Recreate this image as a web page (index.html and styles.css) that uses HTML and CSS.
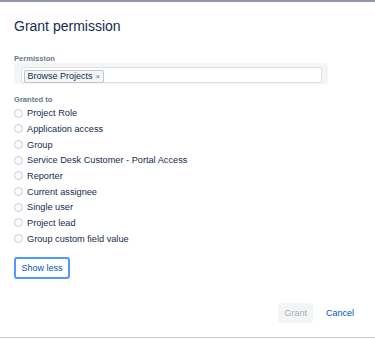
FILE: index.html
```html
<!DOCTYPE html>
<html lang="en">
<head>
  <meta charset="UTF-8" />
  <title>Grant permission</title>
  <link rel="stylesheet" href="styles.css">
</head>
<body>
  <div class="dialog">
    <h1>Grant permission</h1>

    <label class="field-label permission-label">Permission</label>
    <div class="multi-select">
      <div class="multi-select-inner">
        <span class="tag">Browse Projects<span class="tag-x">&times;</span></span>
      </div>
    </div>

    <label class="field-label granted-label">Granted to</label>
    <ul class="radio-list">
      <li><span class="radio"></span>Project Role</li>
      <li><span class="radio"></span>Application access</li>
      <li><span class="radio"></span>Group</li>
      <li><span class="radio"></span>Service Desk Customer - Portal Access</li>
      <li><span class="radio"></span>Reporter</li>
      <li><span class="radio"></span>Current assignee</li>
      <li><span class="radio"></span>Single user</li>
      <li><span class="radio"></span>Project lead</li>
      <li><span class="radio"></span>Group custom field value</li>
    </ul>

    <button class="btn-outline">Show less</button>

    <!-- Footer -->
    <div class="footer">
      <button class="btn-disabled">Grant</button>
      <button class="btn-link">Cancel</button>
    </div>
  </div>
</body>
</html>
```

FILE: styles.css
```css
body {
  margin: 0;
  font-family: "Liberation Sans", Arial, sans-serif;
  background: #ffffff;
  color: #172b4d;
}

.dialog {
  box-sizing: border-box;
  height: 338px;
  border-top: 2px solid #8f97ab;
  border-bottom: 1px solid #c1c7d0;
  padding: 0 14px;
  overflow: hidden;
}

h1 {
  margin: 16px 0 0;
  font-size: 14px;
  font-weight: 400;
  line-height: 16px;
  color: #172b4d;
}

.field-label {
  display: block;
  font-size: 7.6px;
  font-weight: 700;
  line-height: 9.5px;
  color: #6b778c;
}

.permission-label {
  margin-top: 19.5px;
}

.granted-label {
  margin-top: 10.7px;
}

/* Multi select */
.multi-select {
  box-sizing: border-box;
  width: 314px;
  height: 21px;
  padding: 4px 6px 1px 7px;
  background: #f4f5f7;
  border-radius: 3px;
}

.multi-select-inner {
  box-sizing: border-box;
  height: 16px;
  padding: 2px 1.5px;
  background: #ffffff;
  border: 1px solid #dfe1e6;
  border-radius: 2px;
}

.tag {
  display: inline-block;
  vertical-align: top;
  font-size: 9px;
  line-height: 10px;
  padding: 0 3px 0 3px;
  border: 1px solid #c1c7d0;
  border-radius: 2px;
  background: #f4f5f7;
  color: #172b4d;
}

.tag-x {
  margin-left: 3px;
  color: #6b778c;
  font-size: 8px;
}

/* Radios */
.radio-list {
  list-style: none;
  margin: 0;
  padding: 1.3px 0 0;
}

.radio-list li {
  display: flex;
  align-items: center;
  height: 15.67px;
  font-size: 9.2px;
  color: #172b4d;
}

.radio {
  width: 7px;
  height: 7px;
  border: 1px solid #c8cdd6;
  border-radius: 50%;
  background: #fafbfc;
  margin-right: 4px;
}

.btn-outline {
  display: block;
  box-sizing: border-box;
  margin-top: 10.8px;
  height: 22px;
  padding: 0 5.5px;
  font-family: inherit;
  font-size: 9px;
  color: #0052cc;
  background: #ffffff;
  border: 2px solid #4c9aff;
  border-radius: 3px;
}

.footer {
  display: flex;
  justify-content: flex-end;
  align-items: center;
  margin-top: 24px;
  gap: 6px;
  padding-right: 0.5px;
}

.btn-disabled,
.btn-link {
  font-family: inherit;
  font-size: 9px;
  height: 20px;
  padding: 0 6.5px;
  border: none;
  border-radius: 3px;
}

.btn-disabled {
  background: #f4f5f7;
  color: #a5adba;
}

.btn-link {
  background: none;
  color: #0052cc;
}
```
